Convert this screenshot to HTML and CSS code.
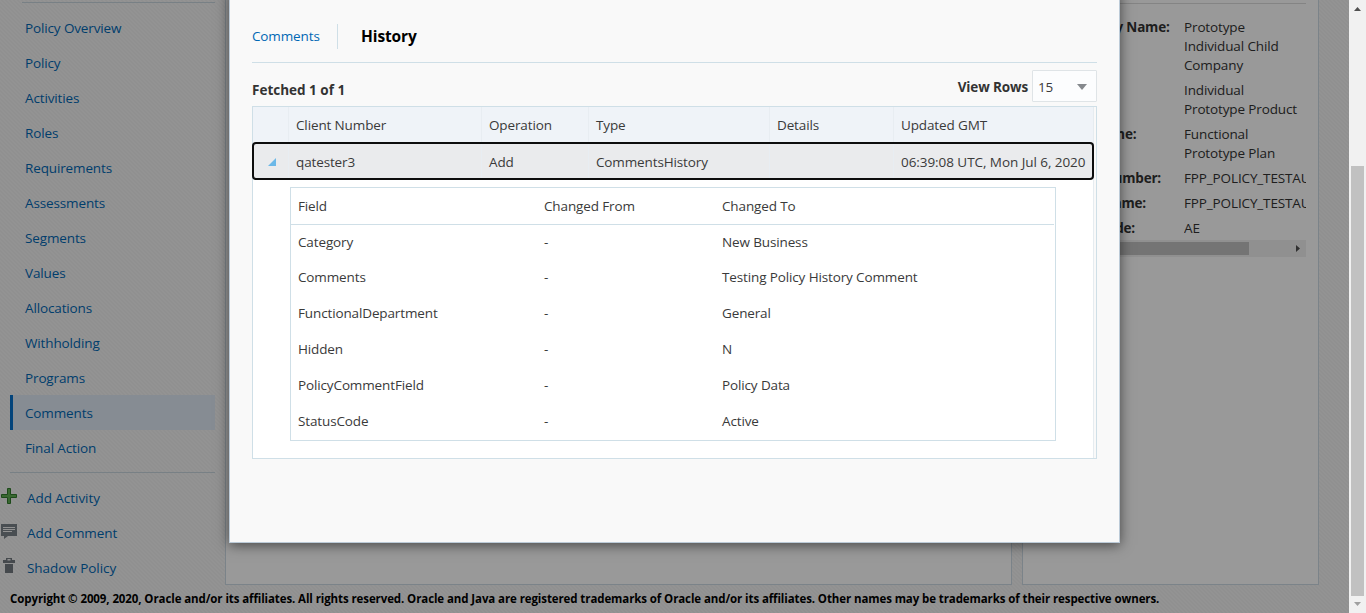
FILE: index.html
```html
<!DOCTYPE html>
<html lang="en">
<head>
<meta charset="utf-8">
<title>Policy Comments History</title>
<link rel="stylesheet" href="styles.css">
</head>
<body>
<div class="app">
  <div class="page">
    <div class="columns">
      <nav class="sidebar">
        <div class="menu">
          <a>Policy Overview</a><a>Policy</a><a>Activities</a><a>Roles</a><a>Requirements</a><a>Assessments</a><a>Segments</a><a>Values</a><a>Allocations</a><a>Withholding</a><a>Programs</a><a class="active">Comments</a><a>Final Action</a>
        </div>
        <div class="actions">
          <a><svg width="18" height="18" viewBox="0 0 18 18"><path d="M7.5 1.5h3v6h6v3h-6v6h-3v-6h-6v-3h6z" fill="#5fae52" stroke="#317c2c" stroke-linejoin="round"/></svg><span>Add Activity</span></a>
          <a><svg width="18" height="18" viewBox="0 0 18 18"><path d="M1 2h16v12H8l-4 3v-3H1z" fill="#7b8289"/><path d="M3 5.500h12M3 7.500h12M3 9.500h9" stroke="#f2f2f2"/></svg><span>Add Comment</span></a>
          <a><svg width="18" height="18" viewBox="0 0 18 18"><path d="M6 1h6v2h3v3H3V3h3zM7.500 2v1.500h3V2zM5 7h8v9H5z" fill="#737a81" fill-rule="evenodd"/></svg><span>Shadow Policy</span></a>
        </div>
      </nav>
      <main class="panel"></main>
      <aside class="panel details">
        <dl>
          <dt>Company Name:</dt><dd>Prototype<br>Individual Child<br>Company</dd>
          <dt>Product:</dt><dd>Individual<br>Prototype Product</dd>
          <dt>Plan Name:</dt><dd>Functional<br>Prototype Plan</dd>
          <dt>Policy Number:</dt><dd>FPP_POLICY_TESTAU</dd>
          <dt>Policy Name:</dt><dd>FPP_POLICY_TESTAU</dd>
          <dt>State Code:</dt><dd>AE</dd>
        </dl>
        <div class="hscroll"><i></i><svg width="17" height="17" viewBox="0 0 17 17"><path d="M7 5l4 3.500-4 3.500z" fill="#505050"/></svg></div>
      </aside>
    </div>
    <footer><span>Copyright © 2009, 2020, Oracle and/or its affiliates. All rights reserved. Oracle and Java are registered trademarks of Oracle and/or its affiliates. Other names may be trademarks of their respective owners.</span></footer>
    <div class="shade"></div>
    <section class="dialog">
      <div class="tabs"><a>Comments</a><b>History</b></div>
      <div class="toolbar"><b class="count">Fetched 1 of 1</b><b class="rows-label">View Rows</b>
        <div class="select"><span>15</span><svg width="10" height="6" viewBox="0 0 10 6"><path d="M0 0h10L5 6z" fill="#85898d"/></svg></div>
      </div>
      <div class="grid">
        <div class="inner">
          <div class="line head"><span></span><span>Client Number</span><span>Operation</span><span>Type</span><span>Details</span><span>Updated GMT</span></div>
          <div class="line selected"><span><svg width="8" height="8" viewBox="0 0 8 8"><path d="M8 0v8H0z" fill="#6bb8e8"/></svg></span><span>qatester3</span><span>Add</span><span>CommentsHistory</span><span></span><span class="date">06:39:08 UTC, Mon Jul 6, 2020</span></div>
          <div class="changes">
            <div class="change title"><span>Field</span><span>Changed From</span><span>Changed To</span></div>
            <div class="change first"><span>Category</span><span>-</span><span>New Business</span></div>
            <div class="change"><span>Comments</span><span>-</span><span>Testing Policy History Comment</span></div>
            <div class="change"><span>FunctionalDepartment</span><span>-</span><span>General</span></div>
            <div class="change"><span>Hidden</span><span>-</span><span>N</span></div>
            <div class="change"><span>PolicyCommentField</span><span>-</span><span>Policy Data</span></div>
            <div class="change"><span>StatusCode</span><span>-</span><span>Active</span></div>
          </div>
        </div>
      </div>
    </section>
  </div>
  <div class="vscroll">
    <svg width="17" height="17" viewBox="0 0 17 17"><path d="M5 11l3.500-4 3.500 4z" fill="#505050"/></svg>
    <i></i>
    <svg width="17" height="17" viewBox="0 0 17 17"><path d="M5 6l3.500 4L12 6z" fill="#a0a0a0"/></svg>
  </div>
</div>
</body>
</html>
```
FILE: styles.css
```css
* { box-sizing: border-box; }
body { margin: 0; font: 13.5px/19px "Open Sans", "Noto Sans", sans-serif; letter-spacing: -0.13px; color: #3a3a3a; overflow: hidden; }
b { color: #333; }
.app { display: flex; width: 1366px; height: 613px; }
.page { position: relative; width: 1349px; height: 613px; overflow: hidden; background: repeating-linear-gradient(45deg, #f6f6f6 0 1.414px, #f1f1f1 1.414px 2.828px); }
.columns { display: flex; height: 585px; }
a { color: #0068b5; white-space: nowrap; }

.sidebar { width: 225px; flex: none; padding-top: 2px; }
.menu { margin: 0 10px 0 10px; padding: 7px 0; border-bottom: 1px solid #c9d6de; position: relative; height: 471px; }
.menu::before { content: ""; position: absolute; left: 12px; right: 0; top: 0; height: 1px; background: #c9d6de; }
.menu a { display: flex; align-items: center; height: 35px; padding: 1px 0 0 15px; position: relative; top: 1px; }
.menu .active { background: #dfeaf5; border-left: 3px solid #0572ce; padding-left: 12px; }
.actions { padding-top: 7px; }
.actions a { display: flex; align-items: center; height: 35px; gap: 9px; }
.actions svg { flex: none; margin-top: -4px; }
.actions span { padding-top: 1px; letter-spacing: -0.05px; }

.panel { width: 787px; height: 585px; background: #fff; border: 1px solid #cedbe4; border-top: 0; flex: none; }
.details { width: 297px; margin-left: 10px; padding: 3px 12px 0 37px; color: #333; }
.details dl { margin: 0 0 0 4px; border-top: 1px solid #ddd; padding-top: 14px; height: 237px; display: grid; grid-template-columns: 120px 122px; row-gap: 6px; align-content: start; overflow: hidden; }
.details dt { font-weight: 700; white-space: nowrap; letter-spacing: -0.2px; margin-left: -3px; }
.details dd { margin: 0; overflow: hidden; white-space: nowrap; }
.hscroll { height: 17px; margin-left: 4px; background: #f1f1f1; display: flex; align-items: center; justify-content: space-between; }
.hscroll i { width: 185px; height: 13px; background: #c1c1c1; }

footer { height: 28px; padding-left: 10px; font-size: 11.5px; line-height: 28px; font-weight: 700; color: #000; white-space: nowrap; letter-spacing: -0.098px; }
.shade { position: absolute; inset: 0; background: rgba(0, 0, 0, 0.4); }

.dialog { position: absolute; left: 229px; top: -10px; width: 891px; height: 553px; padding: 10px 22px 0; background: #f9f9f9; border: 1px solid #bccbd8; border-top: 0; box-shadow: 0 2px 12px rgba(0, 0, 0, 0.55); }
.tabs { height: 63px; border-bottom: 1px solid #cfdfe7; display: flex; align-items: center; padding-top: 11px; }
.tabs a { width: 86px; height: 25px; border-right: 1px solid #cfdfe7; line-height: 25px; }
.tabs b { padding-left: 23px; color: #000; font-size: 15.5px; letter-spacing: -0.1px; }
.toolbar { height: 43px; display: flex; padding-top: 7px; }
.count { padding-top: 11px; flex: 1; letter-spacing: 0; }
.rows-label { padding: 8px 4px 0 0; }
.select { width: 65px; height: 32px; border: 1px solid #dfe4e7; background: #fcfdfe; display: flex; align-items: center; justify-content: space-between; padding: 2px 9px 0 5px; border-radius: 1px; }
.grid { height: 353px; border: 1px solid #cfdfe7; padding-right: 2px; background: #f9f9f9; }
.inner { height: 351px; background: #fff; border-right: 1px solid #e6ecf0; }
.line { display: grid; grid-template-columns: 35px 193px 107px 181px 124px 200px; height: 35px; white-space: nowrap; }
.line span { padding: 1px 0 0 7px; display: flex; align-items: center; border-left: 1px solid #e8edf2; }
.line span:first-child { border: 0; }
.head { background: #eff3f8; }
.selected { position: relative; height: 38px; margin: 0 -1px; width: 842px; background: #eaebed; border: 2px solid #0d0d0d; border-radius: 4px; grid-template-columns: 34px 193px 107px 181px 124px 1fr; }
.selected span { padding-top: 2px; }
.selected span:first-child { padding: 1px 0 0 14px; }
.selected .date { letter-spacing: -0.06px; }
.changes { margin: 7px 0 0 37px; width: 766px; height: 254px; border: 1px solid #cfdfe7; }
.change { display: grid; grid-template-columns: 246px 178px 1fr; height: 36px; align-items: center; padding-left: 7px; white-space: nowrap; }
.change.first { height: 35px; margin-bottom: -1px; }
.change.title { height: 37px; border-bottom: 1px solid #cfdfe7; margin-right: 1px; }

.vscroll { width: 17px; height: 613px; background: #f1f1f1; display: grid; grid-template-rows: 17px 1fr 17px; }
.vscroll i { margin: 149px 2px 0; background: #c1c1c1; }
```
